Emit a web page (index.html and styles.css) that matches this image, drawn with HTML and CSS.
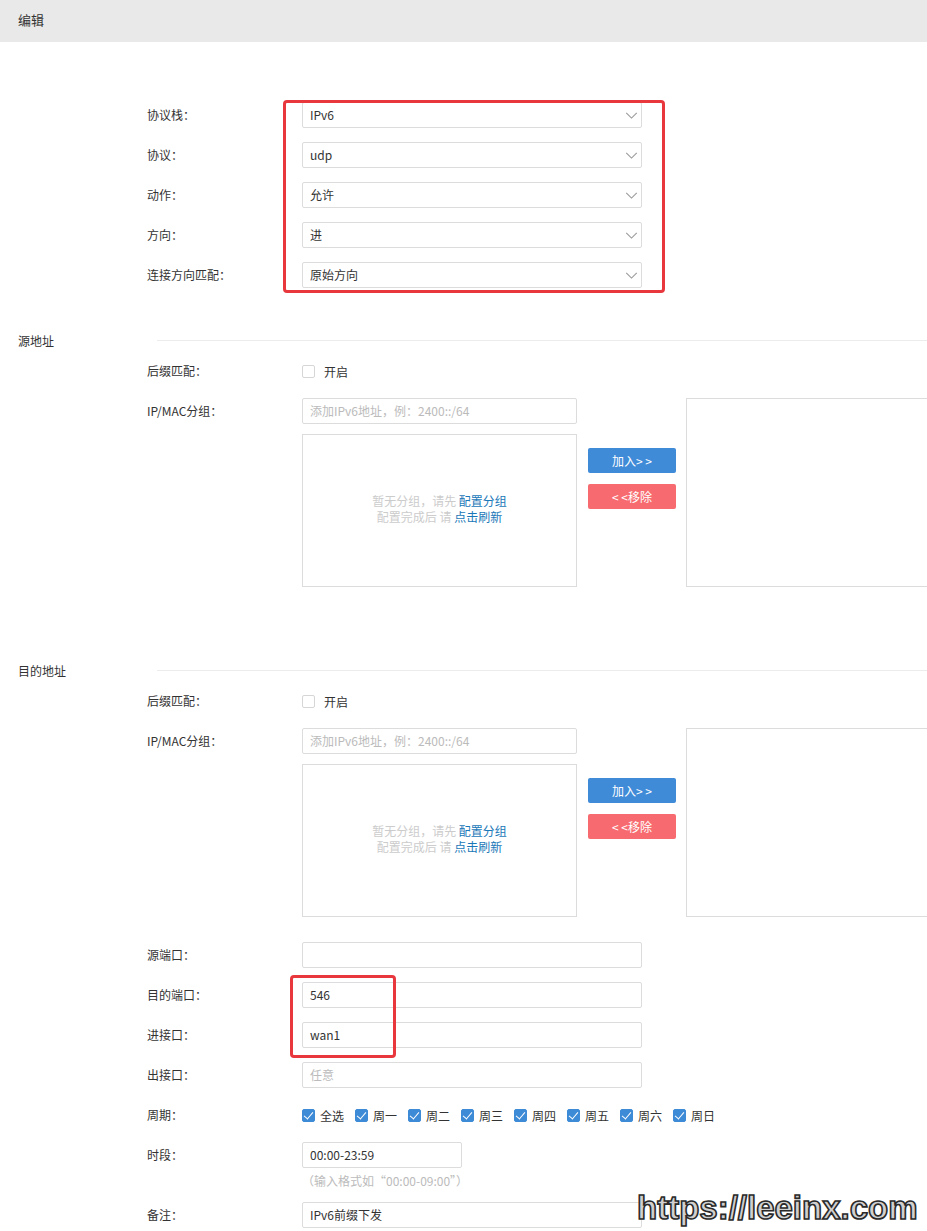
FILE: index.html
```html
<!DOCTYPE html>
<html lang="zh-CN">
<head>
    <meta charset="UTF-8">
    <meta name="viewport" content="width=device-width, initial-scale=1.0">
    <title>编辑</title>
    <link rel="stylesheet" href="styles.css">
</head>
<body>
    <div class="page-head">编辑</div>

    <div class="form-body basic">
        <div class="mark mark-top"></div>
        <div class="form-row">
            <label>协议栈：</label>
            <div class="fake-select">IPv6<svg viewBox="0 0 14 8"><path d="M1 1l6 6 6-6"/></svg></div>
        </div>
        <div class="form-row">
            <label>协议：</label>
            <div class="fake-select">udp<svg viewBox="0 0 14 8"><path d="M1 1l6 6 6-6"/></svg></div>
        </div>
        <div class="form-row">
            <label>动作：</label>
            <div class="fake-select">允许<svg viewBox="0 0 14 8"><path d="M1 1l6 6 6-6"/></svg></div>
        </div>
        <div class="form-row">
            <label>方向：</label>
            <div class="fake-select">进<svg viewBox="0 0 14 8"><path d="M1 1l6 6 6-6"/></svg></div>
        </div>
        <div class="form-row">
            <label>连接方向匹配：</label>
            <div class="fake-select">原始方向<svg viewBox="0 0 14 8"><path d="M1 1l6 6 6-6"/></svg></div>
        </div>
    </div>

    <div class="section-title first"><span>源地址</span><i></i></div>
    <div class="form-body">
        <div class="form-row">
            <label>后缀匹配：</label>
            <span class="check"></span><span class="check-text">开启</span>
        </div>
        <div class="form-row group-row">
            <label>IP/MAC分组：</label>
            <div class="group-left">
                <div class="text-input placeholder">添加IPv6地址，例：2400::/64</div>
                <div class="group-box">
                    <p>暂无分组，请先 <a>配置分组</a></p>
                    <p>配置完成后 请 <a>点击刷新</a></p>
                </div>
            </div>
            <div class="group-btns">
                <button class="btn-add">加入&gt; &gt;</button>
                <button class="btn-del">&lt; &lt;移除</button>
            </div>
            <div class="group-right"></div>
        </div>
    </div>

    <div class="section-title second"><span>目的地址</span><i></i></div>
    <div class="form-body">
        <div class="form-row">
            <label>后缀匹配：</label>
            <span class="check"></span><span class="check-text">开启</span>
        </div>
        <div class="form-row group-row">
            <label>IP/MAC分组：</label>
            <div class="group-left">
                <div class="text-input placeholder">添加IPv6地址，例：2400::/64</div>
                <div class="group-box">
                    <p>暂无分组，请先 <a>配置分组</a></p>
                    <p>配置完成后 请 <a>点击刷新</a></p>
                </div>
            </div>
            <div class="group-btns">
                <button class="btn-add">加入&gt; &gt;</button>
                <button class="btn-del">&lt; &lt;移除</button>
            </div>
            <div class="group-right"></div>
        </div>

        <div class="ports">
            <div class="mark mark-ports"></div>
            <div class="form-row">
                <label>源端口：</label>
                <div class="text-input"></div>
            </div>
            <div class="form-row">
                <label>目的端口：</label>
                <div class="text-input">546</div>
            </div>
            <div class="form-row">
                <label>进接口：</label>
                <div class="text-input">wan1</div>
            </div>
            <div class="form-row">
                <label>出接口：</label>
                <div class="text-input placeholder">任意</div>
            </div>
        </div>

        <div class="form-row">
            <label>周期：</label>
            <div class="week">
                <span class="day"><span class="check on"></span>全选</span>
                <span class="day"><span class="check on"></span>周一</span>
                <span class="day"><span class="check on"></span>周二</span>
                <span class="day"><span class="check on"></span>周三</span>
                <span class="day"><span class="check on"></span>周四</span>
                <span class="day"><span class="check on"></span>周五</span>
                <span class="day"><span class="check on"></span>周六</span>
                <span class="day"><span class="check on"></span>周日</span>
            </div>
        </div>
        <div class="form-row time-row">
            <label>时段：</label>
            <div>
                <div class="text-input short">00:00-23:59</div>
                <div class="hint">（输入格式如“00:00-09:00”）</div>
            </div>
        </div>
        <div class="form-row">
            <label>备注：</label>
            <div class="text-input">IPv6前缀下发</div>
        </div>
    </div>

    <div class="watermark">https://leeinx.com</div>
</body>
</html>
```

FILE: styles.css
```css
body {
    margin: 0;
    font-family: "Noto Sans CJK SC", "Open Sans", sans-serif;
    font-size: 12px;
    color: #333;
    background: #fff;
    overflow: hidden;
    position: relative;
    min-height: 1231px;
}

.page-head {
    height: 42px;
    line-height: 40px;
    padding-left: 18px;
    font-size: 13px;
    background: #e9e9e9;
}

.form-body {
    padding-left: 147px;
    position: relative;
}

.basic {
    margin-top: 60px;
}

.form-row {
    display: flex;
    align-items: center;
    min-height: 26px;
    margin-bottom: 14px;
}

.form-row label {
    width: 155px;
    flex-shrink: 0;
    line-height: 26px;
}

.fake-select,
.text-input {
    width: 340px;
    height: 26px;
    box-sizing: border-box;
    border: 1px solid #dcdcdc;
    border-radius: 2px;
    padding-left: 7px;
    line-height: 24px;
    color: #333;
}

.fake-select {
    display: flex;
    justify-content: space-between;
    align-items: center;
}

.fake-select svg {
    width: 13px;
    height: 7px;
    margin-right: 3px;
    fill: none;
    stroke: #999;
    stroke-width: 1.2;
}

.placeholder {
    color: #bbb;
}

.mark {
    position: absolute;
    border: 3px solid #e8383d;
    border-radius: 4px;
}

.mark-top {
    left: 283px;
    top: -2px;
    width: 376px;
    height: 187px;
}

.mark-ports {
    left: 143px;
    top: 33px;
    width: 100px;
    height: 77px;
}

.ports {
    position: relative;
}

.section-title {
    display: flex;
    align-items: center;
    height: 20px;
    padding-left: 18px;
}

.section-title span {
    width: 139px;
}

.section-title i {
    flex: 1;
    border-top: 1px solid #ececec;
    margin-top: 1px;
}

.section-title.first {
    margin-top: 42px;
    margin-bottom: 8px;
}

.section-title.second {
    margin-top: 73px;
    margin-bottom: 8px;
}

.check {
    display: inline-block;
    width: 13px;
    height: 13px;
    box-sizing: border-box;
    border: 1px solid #d6d6d6;
    border-radius: 2px;
    background: #fff;
    margin-right: 9px;
    position: relative;
}

.check.on {
    background: #3d8ad6;
    border-color: #3d8ad6;
    margin-right: 5px;
}

.check.on::after {
    content: "";
    position: absolute;
    left: 3px;
    top: 0px;
    width: 4px;
    height: 8px;
    border: solid #fff;
    border-width: 0 1.5px 1.5px 0;
    transform: rotate(40deg);
}

.group-row {
    align-items: flex-start;
    margin-bottom: 25px;
}

.group-left .text-input {
    width: 275px;
}

.group-box {
    width: 275px;
    height: 153px;
    box-sizing: border-box;
    border: 1px solid #dcdcdc;
    margin-top: 10px;
    display: flex;
    flex-direction: column;
    justify-content: center;
    align-items: center;
    color: #ccc;
    padding-bottom: 4px;
}

.group-box p {
    margin: 0;
    line-height: 16px;
}

.group-box a {
    color: #1a78b8;
}

.group-btns {
    display: flex;
    flex-direction: column;
    gap: 11px;
    margin-left: 11px;
    margin-top: 50px;
}

.group-btns button {
    width: 88px;
    height: 25px;
    border: none;
    border-radius: 2px;
    color: #fff;
    font-family: inherit;
    font-size: 12px;
    padding: 0;
}

.btn-add {
    background: #3f8bd8;
}

.btn-del {
    background: #f76b70;
}

.group-right {
    width: 260px;
    height: 189px;
    box-sizing: border-box;
    border: 1px solid #dcdcdc;
    margin-left: 10px;
    flex-shrink: 0;
}

.week {
    display: flex;
    align-items: center;
}

.day {
    display: flex;
    align-items: center;
    width: 53px;
}

.text-input.short {
    width: 160px;
}

.time-row {
    align-items: flex-start;
    margin-bottom: 13px;
}

.hint {
    color: #bbb;
    line-height: 16px;
    padding-top: 5px;
}

.watermark {
    position: absolute;
    left: 637px;
    top: 1189px;
    font-family: "Liberation Sans", Arial, sans-serif;
    font-weight: bold;
    font-size: 33px;
    color: #d0d0d0;
    -webkit-text-stroke: 1.6px #2a2a2a;
    text-shadow: 0 0 2px #fff, 0 0 2px #fff;
    white-space: nowrap;
}
```
